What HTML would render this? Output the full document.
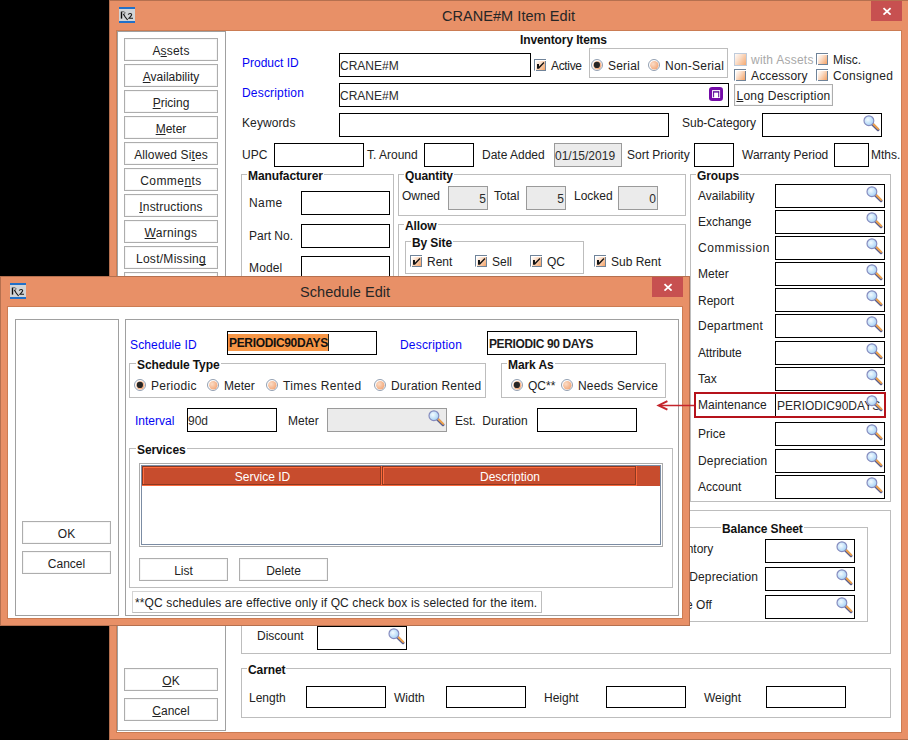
<!DOCTYPE html><html><head><meta charset="utf-8"><title>Item Edit</title><style>
*{box-sizing:border-box;margin:0;padding:0}
html,body{width:908px;height:740px;overflow:hidden;background:#000;}
body{position:relative;font-family:"Liberation Sans",sans-serif;font-size:12px;color:#1a1a1a;}
.abs,.w,.t,.tb,.gb,.btn,.cb,.rb,.lbl,.mag{position:absolute}
.win{position:absolute;background:#E89067;border:1px solid #B5704F;}
.title{position:absolute;font-size:14.5px;color:#262626;white-space:nowrap;letter-spacing:0.05px}
.close{position:absolute;background:#C75050;}
.client{position:absolute;background:#fff;outline:1px solid #CB7C53;}
.panel{position:absolute;background:#fff;border:1px solid #A0A0A0;}
.lbl{white-space:nowrap;font-size:12px;line-height:14px;color:#222;}
.blue{color:#0404F4}
.b{font-weight:bold;color:#111;letter-spacing:-0.12px}
.tb{position:absolute;border:1px solid #000;background:#fff;height:24px;font-size:12px;line-height:22px;padding-left:0;white-space:nowrap;overflow:hidden;color:#2a2a2a}
.tb.dis{border:1px solid #9a9a9a;background:#EBEBEB;}
.tb.r{text-align:right;padding-right:1px}
.gb{border:1px solid #BDBDBD;}
.gb>span{position:absolute;top:-6px;left:5px;background:#fff;padding:0 1px;font-weight:bold;font-size:12px;line-height:14px;white-space:nowrap;color:#111;letter-spacing:-0.1px}
.btn{border:1px solid #ADADAD;background:#fff;font-size:12px;text-align:center;white-space:nowrap;color:#222;box-shadow:inset 0 0 0 1px #f6f6f6}
.cb{width:13px;height:13px;border:1px solid #8E8F8F;background:linear-gradient(135deg,#ffffff 15%,#F7C9A8 60%,#EFA070 100%);}
.cb.dis{border-color:#BFC4CC;opacity:.75}
.cb svg{position:absolute;left:1px;top:1px}
.rb{width:13px;height:13px;border-radius:50%;border:1px solid #8E8F8F;background:radial-gradient(circle at 35% 35%,#ffffff 0%,#F9D3B6 45%,#EFA574 100%);}
.rb.on:after{content:"";position:absolute;left:2px;top:2px;width:7px;height:7px;border-radius:50%;background:#1a1a1a}
.hc{position:absolute;top:0;height:19px;border:1px solid #8C3921;background:#C74C2D;box-shadow:inset 1px 1px 0 #FF6E40;text-align:center;line-height:20px;white-space:nowrap;padding-left:2px}
u{text-decoration:underline;text-underline-offset:1px;text-decoration-skip-ink:none}
</style></head><body>
<svg width="0" height="0" style="position:absolute"><defs><linearGradient id="cg" x1="0" y1="0.15" x2="1" y2="0.85"><stop offset="0" stop-color="#FFF9F4"/><stop offset="0.35" stop-color="#FBDFCB"/><stop offset="1" stop-color="#F5A366"/></linearGradient><radialGradient id="rg" cx="35%" cy="35%" r="75%"><stop offset="0" stop-color="#FBDCC6"/><stop offset="1" stop-color="#F2A575"/></radialGradient></defs></svg>
<div class="win" style="left:109px;top:0;width:810px;height:740px"></div>
<svg class="abs" style="left:119px;top:7px" width="16" height="16" viewBox="0 0 16 16"><rect width="16" height="16" fill="#D2D4D6"/><rect width="16" height="2" fill="#2170C8"/><rect y="14" width="16" height="2" fill="#2170C8"/><path d="M2.5 4.6 V11.6" stroke="#0c0c0c" stroke-width="1.4" fill="none"/><path d="M2.6 4.9 C5 4.1 6.6 5.2 5.8 6.6 C5.4 7.2 4.6 7.4 4.2 7.4" stroke="#555" stroke-width="0.9" fill="none"/><path d="M4.4 7 L6.2 10 L8.6 13" stroke="#1a1a1a" stroke-width="1.2" fill="none"/><path d="M9.2 7.6 C9.8 6 12.9 6.1 12.6 7.9 C12.4 9 11 10 10 11.2 H14" stroke="#1c1c1c" stroke-width="1.15" fill="none"/></svg>
<div class="title" style="left:442px;top:7px;line-height:18px">CRANE#M Item Edit</div>
<div class="close" style="left:871px;top:1px;width:31px;height:20px"></div>
<svg class="abs" style="left:882px;top:6px" width="10" height="9" viewBox="0 0 10 9"><path d="M1.5 2.1 L8.6 8.6 M8.6 2.1 L1.5 8.6" stroke="#fff" stroke-width="1.8"/></svg>
<div class="client" style="left:117px;top:31px;width:784px;height:701px"></div>
<div class="panel" style="left:117px;top:31px;width:109px;height:700px"></div>
<div class="btn" style="left:124px;top:38px;width:94px;height:23px;line-height:24px;letter-spacing:0.200px;">A<u>s</u>sets</div>
<div class="btn" style="left:124px;top:64px;width:94px;height:23px;line-height:24px;"><u>A</u>vailability</div>
<div class="btn" style="left:124px;top:90px;width:94px;height:23px;line-height:24px;"><u>P</u>ricing</div>
<div class="btn" style="left:124px;top:116px;width:94px;height:23px;line-height:24px;"><u>M</u>eter</div>
<div class="btn" style="left:124px;top:142px;width:94px;height:23px;line-height:24px;letter-spacing:0.131px;">Allowed Si<u>t</u>es</div>
<div class="btn" style="left:124px;top:168px;width:94px;height:23px;line-height:24px;letter-spacing:0.438px;">Comme<u>n</u>ts</div>
<div class="btn" style="left:124px;top:194px;width:94px;height:23px;line-height:24px;letter-spacing:0.167px;"><u>I</u>nstructions</div>
<div class="btn" style="left:124px;top:220px;width:94px;height:23px;line-height:24px;letter-spacing:0.325px;"><u>W</u>arnings</div>
<div class="btn" style="left:124px;top:246px;width:94px;height:23px;line-height:24px;letter-spacing:0.283px;">Lost/Missin<u>g</u></div>
<div class="btn" style="left:124px;top:272px;width:94px;height:23px;line-height:24px;"></div>
<div class="btn" style="left:124px;top:668px;width:94px;height:23px;line-height:24px;"><u>O</u>K</div>
<div class="btn" style="left:124px;top:698px;width:94px;height:23px;line-height:24px;"><u>C</u>ancel</div>
<div class="lbl b" style="left:520px;top:33px;">Inventory Items</div>
<div class="lbl blue" style="left:242px;top:56px;">Product ID</div>
<div class="tb " style="left:339px;top:53px;width:192px;height:24px;line-height:24px;">CRANE#M</div>
<svg class="abs" style="left:534px;top:59px" width="12" height="12" viewBox="0 0 12 12"><rect x="2" y="2" width="9.5" height="9.5" fill="url(#cg)"/><path d="M0 0.5 H12 M0.5 0 V11.6" stroke="#6F8399" fill="none"/><path d="M2 11.5 H12 M11.5 2 V12" stroke="#6F8399" fill="none"/><path d="M3 5 L5 5 L5 7.6 L9.5 3 L10.4 4 L5 9.8 L3 9.8 Z" fill="#151515"/></svg>
<div class="lbl " style="left:551px;top:59px;letter-spacing:-0.333px;">Active</div>
<div class="gb" style="left:589px;top:48px;width:139px;height:30px"></div>
<svg class="abs" style="left:591px;top:59px" width="12" height="12" viewBox="0 0 12 12"><circle cx="6" cy="6" r="5.5" fill="#fff" stroke="#7E8EA3" stroke-width="0.85"/><circle cx="6.3" cy="6.3" r="4.2" fill="url(#rg)"/><circle cx="5.9" cy="5.9" r="3.1" fill="#262626"/></svg>
<div class="lbl " style="left:608px;top:59px;letter-spacing:0.200px;">Serial</div>
<svg class="abs" style="left:648px;top:59px" width="12" height="12" viewBox="0 0 12 12"><circle cx="6" cy="6" r="5.5" fill="#fff" stroke="#7E8EA3" stroke-width="0.85"/><circle cx="6.3" cy="6.3" r="4.2" fill="url(#rg)"/></svg>
<div class="lbl " style="left:665px;top:59px;letter-spacing:0.240px;">Non-Serial</div>
<svg class="abs" style="left:734px;top:53px" width="13" height="13" viewBox="0 0 13 13"><rect x="0.5" y="0.5" width="12" height="12" fill="url(#cg)" stroke="#B9C6D8" opacity="0.9"/></svg>
<div class="lbl " style="left:751px;top:53px;letter-spacing:0.236px;color:#a8a8a8">with Assets</div>
<svg class="abs" style="left:816px;top:53px" width="12" height="12" viewBox="0 0 12 12"><rect x="2" y="2" width="9.5" height="9.5" fill="url(#cg)"/><path d="M0 0.5 H12 M0.5 0 V11.6" stroke="#6F8399" fill="none"/><path d="M2 11.5 H12 M11.5 2 V12" stroke="#6F8399" fill="none"/></svg>
<div class="lbl " style="left:833px;top:53px;">Misc.</div>
<svg class="abs" style="left:734px;top:69px" width="12" height="12" viewBox="0 0 12 12"><rect x="2" y="2" width="9.5" height="9.5" fill="url(#cg)"/><path d="M0 0.5 H12 M0.5 0 V11.6" stroke="#6F8399" fill="none"/><path d="M2 11.5 H12 M11.5 2 V12" stroke="#6F8399" fill="none"/></svg>
<div class="lbl " style="left:751px;top:69px;letter-spacing:0.133px;">Accessory</div>
<svg class="abs" style="left:816px;top:69px" width="12" height="12" viewBox="0 0 12 12"><rect x="2" y="2" width="9.5" height="9.5" fill="url(#cg)"/><path d="M0 0.5 H12 M0.5 0 V11.6" stroke="#6F8399" fill="none"/><path d="M2 11.5 H12 M11.5 2 V12" stroke="#6F8399" fill="none"/></svg>
<div class="lbl " style="left:833px;top:69px;letter-spacing:0.333px;">Consigned</div>
<div class="lbl blue" style="left:242px;top:86px;letter-spacing:0.182px;">Description</div>
<div class="tb " style="left:339px;top:83px;width:390px;height:24px;line-height:24px;">CRANE#M</div>
<svg class="abs" style="left:709px;top:87px" width="14" height="14" viewBox="0 0 14 14"><rect x="0" y="0" width="14" height="14" rx="3.2" fill="#740BA8"/><rect x="3.1" y="3.1" width="8" height="7.9" fill="#fff"/><rect x="4.1" y="4.2" width="6.1" height="1.4" fill="#5C0A9A"/><path d="M4.6 5 V9.9 M9.7 5 V9.9" stroke="#5C0A9A" stroke-width="1" stroke-linecap="round" fill="none"/></svg>
<div class="btn" style="left:734px;top:84px;width:99px;height:22px;line-height:23px;letter-spacing:0.250px;"><u>L</u>ong Description</div>
<div class="lbl " style="left:242px;top:116px;letter-spacing:0.100px;">Keywords</div>
<div class="tb " style="left:339px;top:113px;width:330px;height:24px;line-height:24px;"></div>
<div class="lbl " style="left:682px;top:116px;">Sub-Category</div>
<div class="tb " style="left:762px;top:113px;width:120px;height:24px;line-height:24px;"></div>
<svg class="mag" style="left:863px;top:115px" width="17" height="17" viewBox="0 0 17 17">
<defs><radialGradient id="lg1" cx="40%" cy="40%" r="65%"><stop offset="0" stop-color="#F4FBFF"/><stop offset="1" stop-color="#A2D0F5"/></radialGradient></defs>
<path d="M9.6 9.4 L15.0 14.7" stroke="#5A5F8C" stroke-width="3" stroke-linecap="round"/>
<path d="M10 8.8 L15.2 13.9" stroke="#F0A24A" stroke-width="2" stroke-linecap="round"/>
<circle cx="5.9" cy="5.7" r="4.9" fill="url(#lg1)" stroke="#858BBE" stroke-width="1.15"/>
</svg>
<div class="lbl " style="left:242px;top:148px;">UPC</div>
<div class="tb " style="left:274px;top:143px;width:90px;height:24px;line-height:24px;"></div>
<div class="lbl " style="left:367px;top:148px;">T. Around</div>
<div class="tb " style="left:424px;top:143px;width:50px;height:24px;line-height:24px;"></div>
<div class="lbl " style="left:482px;top:148px;">Date Added</div>
<div class="tb dis" style="left:554px;top:143px;width:68px;height:24px;line-height:24px;">01/15/2019</div>
<div class="lbl " style="left:627px;top:148px;">Sort Priority</div>
<div class="tb " style="left:694px;top:143px;width:40px;height:24px;line-height:24px;"></div>
<div class="lbl " style="left:742px;top:148px;">Warranty Period</div>
<div class="tb " style="left:834px;top:143px;width:35px;height:24px;line-height:24px;"></div>
<div class="lbl " style="left:871px;top:148px;">Mths.</div>
<div class="gb" style="left:241px;top:174px;width:153px;height:120px"><span style="left:5px">Manufacturer</span></div>
<div class="lbl " style="left:249px;top:196px;letter-spacing:0.425px;">Name</div>
<div class="tb " style="left:301px;top:191px;width:89px;height:24px;line-height:24px;"></div>
<div class="lbl " style="left:249px;top:229px;">Part No.</div>
<div class="tb " style="left:301px;top:224px;width:89px;height:24px;line-height:24px;"></div>
<div class="lbl " style="left:249px;top:261px;letter-spacing:0.140px;">Model</div>
<div class="tb " style="left:301px;top:256px;width:89px;height:24px;line-height:24px;"></div>
<div class="gb" style="left:398px;top:174px;width:288px;height:42px"><span style="left:5px">Quantity</span></div>
<div class="lbl " style="left:402px;top:189px;">Owned</div>
<div class="tb dis r" style="left:448px;top:186px;width:40px;height:24px;line-height:24px;">5</div>
<div class="lbl " style="left:494px;top:189px;">Total</div>
<div class="tb dis r" style="left:526px;top:186px;width:40px;height:24px;line-height:24px;">5</div>
<div class="lbl " style="left:574px;top:189px;">Locked</div>
<div class="tb dis r" style="left:618px;top:186px;width:40px;height:24px;line-height:24px;">0</div>
<div class="gb" style="left:398px;top:224px;width:288px;height:80px"><span style="left:5px">Allow</span></div>
<div class="gb" style="left:405px;top:241px;width:179px;height:33px"><span style="left:5px">By Site</span></div>
<svg class="abs" style="left:410px;top:255px" width="12" height="12" viewBox="0 0 12 12"><rect x="2" y="2" width="9.5" height="9.5" fill="url(#cg)"/><path d="M0 0.5 H12 M0.5 0 V11.6" stroke="#6F8399" fill="none"/><path d="M2 11.5 H12 M11.5 2 V12" stroke="#6F8399" fill="none"/><path d="M3 5 L5 5 L5 7.6 L9.5 3 L10.4 4 L5 9.8 L3 9.8 Z" fill="#151515"/></svg>
<div class="lbl " style="left:427px;top:255px;">Rent</div>
<svg class="abs" style="left:475px;top:255px" width="12" height="12" viewBox="0 0 12 12"><rect x="2" y="2" width="9.5" height="9.5" fill="url(#cg)"/><path d="M0 0.5 H12 M0.5 0 V11.6" stroke="#6F8399" fill="none"/><path d="M2 11.5 H12 M11.5 2 V12" stroke="#6F8399" fill="none"/><path d="M3 5 L5 5 L5 7.6 L9.5 3 L10.4 4 L5 9.8 L3 9.8 Z" fill="#151515"/></svg>
<div class="lbl " style="left:492px;top:255px;">Sell</div>
<svg class="abs" style="left:530px;top:255px" width="12" height="12" viewBox="0 0 12 12"><rect x="2" y="2" width="9.5" height="9.5" fill="url(#cg)"/><path d="M0 0.5 H12 M0.5 0 V11.6" stroke="#6F8399" fill="none"/><path d="M2 11.5 H12 M11.5 2 V12" stroke="#6F8399" fill="none"/><path d="M3 5 L5 5 L5 7.6 L9.5 3 L10.4 4 L5 9.8 L3 9.8 Z" fill="#151515"/></svg>
<div class="lbl " style="left:547px;top:255px;">QC</div>
<svg class="abs" style="left:594px;top:255px" width="12" height="12" viewBox="0 0 12 12"><rect x="2" y="2" width="9.5" height="9.5" fill="url(#cg)"/><path d="M0 0.5 H12 M0.5 0 V11.6" stroke="#6F8399" fill="none"/><path d="M2 11.5 H12 M11.5 2 V12" stroke="#6F8399" fill="none"/><path d="M3 5 L5 5 L5 7.6 L9.5 3 L10.4 4 L5 9.8 L3 9.8 Z" fill="#151515"/></svg>
<div class="lbl " style="left:611px;top:255px;">Sub Rent</div>
<div class="gb" style="left:690px;top:174px;width:201px;height:328px"><span style="left:5px">Groups</span></div>
<div class="lbl " style="left:698px;top:189px;">Availability</div>
<div class="tb " style="left:775px;top:184px;width:110px;height:24px;line-height:24px;"></div>
<svg class="mag" style="left:866px;top:186px" width="17" height="17" viewBox="0 0 17 17">
<defs><radialGradient id="lg2" cx="40%" cy="40%" r="65%"><stop offset="0" stop-color="#F4FBFF"/><stop offset="1" stop-color="#A2D0F5"/></radialGradient></defs>
<path d="M9.6 9.4 L15.0 14.7" stroke="#5A5F8C" stroke-width="3" stroke-linecap="round"/>
<path d="M10 8.8 L15.2 13.9" stroke="#F0A24A" stroke-width="2" stroke-linecap="round"/>
<circle cx="5.9" cy="5.7" r="4.9" fill="url(#lg2)" stroke="#858BBE" stroke-width="1.15"/>
</svg>
<div class="lbl " style="left:698px;top:215px;">Exchange</div>
<div class="tb " style="left:775px;top:210px;width:110px;height:24px;line-height:24px;"></div>
<svg class="mag" style="left:866px;top:212px" width="17" height="17" viewBox="0 0 17 17">
<defs><radialGradient id="lg3" cx="40%" cy="40%" r="65%"><stop offset="0" stop-color="#F4FBFF"/><stop offset="1" stop-color="#A2D0F5"/></radialGradient></defs>
<path d="M9.6 9.4 L15.0 14.7" stroke="#5A5F8C" stroke-width="3" stroke-linecap="round"/>
<path d="M10 8.8 L15.2 13.9" stroke="#F0A24A" stroke-width="2" stroke-linecap="round"/>
<circle cx="5.9" cy="5.7" r="4.9" fill="url(#lg3)" stroke="#858BBE" stroke-width="1.15"/>
</svg>
<div class="lbl " style="left:698px;top:241px;letter-spacing:0.600px;">Commission</div>
<div class="tb " style="left:775px;top:236px;width:110px;height:24px;line-height:24px;"></div>
<svg class="mag" style="left:866px;top:238px" width="17" height="17" viewBox="0 0 17 17">
<defs><radialGradient id="lg4" cx="40%" cy="40%" r="65%"><stop offset="0" stop-color="#F4FBFF"/><stop offset="1" stop-color="#A2D0F5"/></radialGradient></defs>
<path d="M9.6 9.4 L15.0 14.7" stroke="#5A5F8C" stroke-width="3" stroke-linecap="round"/>
<path d="M10 8.8 L15.2 13.9" stroke="#F0A24A" stroke-width="2" stroke-linecap="round"/>
<circle cx="5.9" cy="5.7" r="4.9" fill="url(#lg4)" stroke="#858BBE" stroke-width="1.15"/>
</svg>
<div class="lbl " style="left:698px;top:267px;">Meter</div>
<div class="tb " style="left:775px;top:262px;width:110px;height:24px;line-height:24px;"></div>
<svg class="mag" style="left:866px;top:264px" width="17" height="17" viewBox="0 0 17 17">
<defs><radialGradient id="lg5" cx="40%" cy="40%" r="65%"><stop offset="0" stop-color="#F4FBFF"/><stop offset="1" stop-color="#A2D0F5"/></radialGradient></defs>
<path d="M9.6 9.4 L15.0 14.7" stroke="#5A5F8C" stroke-width="3" stroke-linecap="round"/>
<path d="M10 8.8 L15.2 13.9" stroke="#F0A24A" stroke-width="2" stroke-linecap="round"/>
<circle cx="5.9" cy="5.7" r="4.9" fill="url(#lg5)" stroke="#858BBE" stroke-width="1.15"/>
</svg>
<div class="lbl " style="left:698px;top:294px;">Report</div>
<div class="tb " style="left:775px;top:288px;width:110px;height:24px;line-height:24px;"></div>
<svg class="mag" style="left:866px;top:290px" width="17" height="17" viewBox="0 0 17 17">
<defs><radialGradient id="lg6" cx="40%" cy="40%" r="65%"><stop offset="0" stop-color="#F4FBFF"/><stop offset="1" stop-color="#A2D0F5"/></radialGradient></defs>
<path d="M9.6 9.4 L15.0 14.7" stroke="#5A5F8C" stroke-width="3" stroke-linecap="round"/>
<path d="M10 8.8 L15.2 13.9" stroke="#F0A24A" stroke-width="2" stroke-linecap="round"/>
<circle cx="5.9" cy="5.7" r="4.9" fill="url(#lg6)" stroke="#858BBE" stroke-width="1.15"/>
</svg>
<div class="lbl " style="left:698px;top:319px;letter-spacing:0.240px;">Department</div>
<div class="tb " style="left:775px;top:314px;width:110px;height:24px;line-height:24px;"></div>
<svg class="mag" style="left:866px;top:316px" width="17" height="17" viewBox="0 0 17 17">
<defs><radialGradient id="lg7" cx="40%" cy="40%" r="65%"><stop offset="0" stop-color="#F4FBFF"/><stop offset="1" stop-color="#A2D0F5"/></radialGradient></defs>
<path d="M9.6 9.4 L15.0 14.7" stroke="#5A5F8C" stroke-width="3" stroke-linecap="round"/>
<path d="M10 8.8 L15.2 13.9" stroke="#F0A24A" stroke-width="2" stroke-linecap="round"/>
<circle cx="5.9" cy="5.7" r="4.9" fill="url(#lg7)" stroke="#858BBE" stroke-width="1.15"/>
</svg>
<div class="lbl " style="left:698px;top:346px;letter-spacing:-0.133px;">Attribute</div>
<div class="tb " style="left:775px;top:341px;width:110px;height:24px;line-height:24px;"></div>
<svg class="mag" style="left:866px;top:343px" width="17" height="17" viewBox="0 0 17 17">
<defs><radialGradient id="lg8" cx="40%" cy="40%" r="65%"><stop offset="0" stop-color="#F4FBFF"/><stop offset="1" stop-color="#A2D0F5"/></radialGradient></defs>
<path d="M9.6 9.4 L15.0 14.7" stroke="#5A5F8C" stroke-width="3" stroke-linecap="round"/>
<path d="M10 8.8 L15.2 13.9" stroke="#F0A24A" stroke-width="2" stroke-linecap="round"/>
<circle cx="5.9" cy="5.7" r="4.9" fill="url(#lg8)" stroke="#858BBE" stroke-width="1.15"/>
</svg>
<div class="lbl " style="left:698px;top:372px;">Tax</div>
<div class="tb " style="left:775px;top:367px;width:110px;height:24px;line-height:24px;"></div>
<svg class="mag" style="left:866px;top:369px" width="17" height="17" viewBox="0 0 17 17">
<defs><radialGradient id="lg9" cx="40%" cy="40%" r="65%"><stop offset="0" stop-color="#F4FBFF"/><stop offset="1" stop-color="#A2D0F5"/></radialGradient></defs>
<path d="M9.6 9.4 L15.0 14.7" stroke="#5A5F8C" stroke-width="3" stroke-linecap="round"/>
<path d="M10 8.8 L15.2 13.9" stroke="#F0A24A" stroke-width="2" stroke-linecap="round"/>
<circle cx="5.9" cy="5.7" r="4.9" fill="url(#lg9)" stroke="#858BBE" stroke-width="1.15"/>
</svg>
<div class="lbl " style="left:698px;top:398px;">Maintenance</div>
<div class="tb " style="left:775px;top:393px;width:110px;height:24px;line-height:24px;padding-left:1px">PERIODIC90DAYS</div>
<svg class="mag" style="left:866px;top:395px" width="17" height="17" viewBox="0 0 17 17">
<defs><radialGradient id="lg10" cx="40%" cy="40%" r="65%"><stop offset="0" stop-color="#F4FBFF"/><stop offset="1" stop-color="#A2D0F5"/></radialGradient></defs>
<path d="M9.6 9.4 L15.0 14.7" stroke="#5A5F8C" stroke-width="3" stroke-linecap="round"/>
<path d="M10 8.8 L15.2 13.9" stroke="#F0A24A" stroke-width="2" stroke-linecap="round"/>
<circle cx="5.9" cy="5.7" r="4.9" fill="url(#lg10)" stroke="#858BBE" stroke-width="1.15"/>
</svg>
<div class="lbl " style="left:698px;top:427px;">Price</div>
<div class="tb " style="left:775px;top:422px;width:110px;height:24px;line-height:24px;"></div>
<svg class="mag" style="left:866px;top:424px" width="17" height="17" viewBox="0 0 17 17">
<defs><radialGradient id="lg11" cx="40%" cy="40%" r="65%"><stop offset="0" stop-color="#F4FBFF"/><stop offset="1" stop-color="#A2D0F5"/></radialGradient></defs>
<path d="M9.6 9.4 L15.0 14.7" stroke="#5A5F8C" stroke-width="3" stroke-linecap="round"/>
<path d="M10 8.8 L15.2 13.9" stroke="#F0A24A" stroke-width="2" stroke-linecap="round"/>
<circle cx="5.9" cy="5.7" r="4.9" fill="url(#lg11)" stroke="#858BBE" stroke-width="1.15"/>
</svg>
<div class="lbl " style="left:698px;top:454px;letter-spacing:0.167px;">Depreciation</div>
<div class="tb " style="left:775px;top:449px;width:110px;height:24px;line-height:24px;"></div>
<svg class="mag" style="left:866px;top:451px" width="17" height="17" viewBox="0 0 17 17">
<defs><radialGradient id="lg12" cx="40%" cy="40%" r="65%"><stop offset="0" stop-color="#F4FBFF"/><stop offset="1" stop-color="#A2D0F5"/></radialGradient></defs>
<path d="M9.6 9.4 L15.0 14.7" stroke="#5A5F8C" stroke-width="3" stroke-linecap="round"/>
<path d="M10 8.8 L15.2 13.9" stroke="#F0A24A" stroke-width="2" stroke-linecap="round"/>
<circle cx="5.9" cy="5.7" r="4.9" fill="url(#lg12)" stroke="#858BBE" stroke-width="1.15"/>
</svg>
<div class="lbl " style="left:698px;top:480px;">Account</div>
<div class="tb " style="left:775px;top:475px;width:110px;height:24px;line-height:24px;"></div>
<svg class="mag" style="left:866px;top:477px" width="17" height="17" viewBox="0 0 17 17">
<defs><radialGradient id="lg13" cx="40%" cy="40%" r="65%"><stop offset="0" stop-color="#F4FBFF"/><stop offset="1" stop-color="#A2D0F5"/></radialGradient></defs>
<path d="M9.6 9.4 L15.0 14.7" stroke="#5A5F8C" stroke-width="3" stroke-linecap="round"/>
<path d="M10 8.8 L15.2 13.9" stroke="#F0A24A" stroke-width="2" stroke-linecap="round"/>
<circle cx="5.9" cy="5.7" r="4.9" fill="url(#lg13)" stroke="#858BBE" stroke-width="1.15"/>
</svg>
<div class="abs" style="left:694px;top:392px;width:192px;height:26px;border:2px solid #B5121B"></div>
<div class="gb" style="left:241px;top:510px;width:650px;height:144px"><span style="left:5px"></span></div>
<div class="gb" style="left:600px;top:527px;width:268px;height:95px"><span style="left:120px">Balance Sheet</span></div>
<div class="lbl " style="left:664px;top:542px;">Inventory</div>
<div class="tb " style="left:765px;top:539px;width:90px;height:24px;line-height:24px;"></div>
<svg class="mag" style="left:836px;top:541px" width="17" height="17" viewBox="0 0 17 17">
<defs><radialGradient id="lg14" cx="40%" cy="40%" r="65%"><stop offset="0" stop-color="#F4FBFF"/><stop offset="1" stop-color="#A2D0F5"/></radialGradient></defs>
<path d="M9.6 9.4 L15.0 14.7" stroke="#5A5F8C" stroke-width="3" stroke-linecap="round"/>
<path d="M10 8.8 L15.2 13.9" stroke="#F0A24A" stroke-width="2" stroke-linecap="round"/>
<circle cx="5.9" cy="5.7" r="4.9" fill="url(#lg14)" stroke="#858BBE" stroke-width="1.15"/>
</svg>
<div class="lbl " style="left:662px;top:570px;letter-spacing:0.118px;">Acc. Depreciation</div>
<div class="tb " style="left:765px;top:567px;width:90px;height:24px;line-height:24px;"></div>
<svg class="mag" style="left:836px;top:569px" width="17" height="17" viewBox="0 0 17 17">
<defs><radialGradient id="lg15" cx="40%" cy="40%" r="65%"><stop offset="0" stop-color="#F4FBFF"/><stop offset="1" stop-color="#A2D0F5"/></radialGradient></defs>
<path d="M9.6 9.4 L15.0 14.7" stroke="#5A5F8C" stroke-width="3" stroke-linecap="round"/>
<path d="M10 8.8 L15.2 13.9" stroke="#F0A24A" stroke-width="2" stroke-linecap="round"/>
<circle cx="5.9" cy="5.7" r="4.9" fill="url(#lg15)" stroke="#858BBE" stroke-width="1.15"/>
</svg>
<div class="lbl " style="left:665px;top:598px;">Write Off</div>
<div class="tb " style="left:765px;top:595px;width:90px;height:24px;line-height:24px;"></div>
<svg class="mag" style="left:836px;top:597px" width="17" height="17" viewBox="0 0 17 17">
<defs><radialGradient id="lg16" cx="40%" cy="40%" r="65%"><stop offset="0" stop-color="#F4FBFF"/><stop offset="1" stop-color="#A2D0F5"/></radialGradient></defs>
<path d="M9.6 9.4 L15.0 14.7" stroke="#5A5F8C" stroke-width="3" stroke-linecap="round"/>
<path d="M10 8.8 L15.2 13.9" stroke="#F0A24A" stroke-width="2" stroke-linecap="round"/>
<circle cx="5.9" cy="5.7" r="4.9" fill="url(#lg16)" stroke="#858BBE" stroke-width="1.15"/>
</svg>
<div class="lbl " style="left:257px;top:629px;">Discount</div>
<div class="tb " style="left:317px;top:626px;width:90px;height:24px;line-height:24px;"></div>
<svg class="mag" style="left:388px;top:628px" width="17" height="17" viewBox="0 0 17 17">
<defs><radialGradient id="lg17" cx="40%" cy="40%" r="65%"><stop offset="0" stop-color="#F4FBFF"/><stop offset="1" stop-color="#A2D0F5"/></radialGradient></defs>
<path d="M9.6 9.4 L15.0 14.7" stroke="#5A5F8C" stroke-width="3" stroke-linecap="round"/>
<path d="M10 8.8 L15.2 13.9" stroke="#F0A24A" stroke-width="2" stroke-linecap="round"/>
<circle cx="5.9" cy="5.7" r="4.9" fill="url(#lg17)" stroke="#858BBE" stroke-width="1.15"/>
</svg>
<div class="gb" style="left:241px;top:668px;width:650px;height:50px"><span style="left:5px">Carnet</span></div>
<div class="lbl " style="left:249px;top:691px;">Length</div>
<div class="tb " style="left:306px;top:686px;width:80px;height:22px;line-height:22px;"></div>
<div class="lbl " style="left:394px;top:691px;">Width</div>
<div class="tb " style="left:446px;top:686px;width:80px;height:22px;line-height:22px;"></div>
<div class="lbl " style="left:544px;top:691px;">Height</div>
<div class="tb " style="left:606px;top:686px;width:80px;height:22px;line-height:22px;"></div>
<div class="lbl " style="left:704px;top:691px;">Weight</div>
<div class="tb " style="left:766px;top:686px;width:80px;height:22px;line-height:22px;"></div>
<div class="win" style="left:0px;top:276px;width:690px;height:350px"></div>
<svg class="abs" style="left:10px;top:283px" width="16" height="16" viewBox="0 0 16 16"><rect width="16" height="16" fill="#D2D4D6"/><rect width="16" height="2" fill="#2170C8"/><rect y="14" width="16" height="2" fill="#2170C8"/><path d="M2.5 4.6 V11.6" stroke="#0c0c0c" stroke-width="1.4" fill="none"/><path d="M2.6 4.9 C5 4.1 6.6 5.2 5.8 6.6 C5.4 7.2 4.6 7.4 4.2 7.4" stroke="#555" stroke-width="0.9" fill="none"/><path d="M4.4 7 L6.2 10 L8.6 13" stroke="#1a1a1a" stroke-width="1.2" fill="none"/><path d="M9.2 7.6 C9.8 6 12.9 6.1 12.6 7.9 C12.4 9 11 10 10 11.2 H14" stroke="#1c1c1c" stroke-width="1.15" fill="none"/></svg>
<div class="title" style="left:300px;top:283px;line-height:18px">Schedule Edit</div>
<div class="close" style="left:652px;top:277px;width:31px;height:20px"></div>
<svg class="abs" style="left:663px;top:282px" width="10" height="9" viewBox="0 0 10 9"><path d="M1.5 2.1 L8.6 8.6 M8.6 2.1 L1.5 8.6" stroke="#fff" stroke-width="1.8"/></svg>
<div class="client" style="left:8px;top:307px;width:674px;height:311px"></div>
<div class="panel" style="left:15px;top:319px;width:104px;height:297px"></div>
<div class="panel" style="left:125px;top:319px;width:554px;height:297px"></div>
<div class="btn" style="left:22px;top:521px;width:89px;height:23px;line-height:24px;">OK</div>
<div class="btn" style="left:22px;top:551px;width:89px;height:23px;line-height:24px;">Cancel</div>
<div class="lbl blue" style="left:130px;top:338px;letter-spacing:0.136px;">Schedule ID</div>
<div class="tb " style="left:227px;top:331px;width:150px;height:24px;line-height:24px;"><span style="position:absolute;left:0;top:2px;height:17px;line-height:19px;background:#F79646;font-weight:bold;color:#111;letter-spacing:-0.34px;padding-left:1px;border-right:1px solid #222">PERIODIC90DAYS</span></div>
<div class="lbl blue" style="left:400px;top:338px;letter-spacing:0.182px;">Description</div>
<div class="tb " style="left:487px;top:331px;width:150px;height:24px;line-height:24px;"><b style="letter-spacing:-0.38px;color:#1c1c1c;padding-left:1px">PERIODIC 90 DAYS</b></div>
<div class="gb" style="left:129px;top:363px;width:357px;height:35px"><span style="left:6px">Schedule Type</span></div>
<svg class="abs" style="left:134px;top:379px" width="12" height="12" viewBox="0 0 12 12"><circle cx="6" cy="6" r="5.5" fill="#fff" stroke="#7E8EA3" stroke-width="0.85"/><circle cx="6.3" cy="6.3" r="4.2" fill="url(#rg)"/><circle cx="5.9" cy="5.9" r="3.1" fill="#262626"/></svg>
<div class="lbl " style="left:151px;top:379px;letter-spacing:0.312px;">Periodic</div>
<svg class="abs" style="left:207px;top:379px" width="12" height="12" viewBox="0 0 12 12"><circle cx="6" cy="6" r="5.5" fill="#fff" stroke="#7E8EA3" stroke-width="0.85"/><circle cx="6.3" cy="6.3" r="4.2" fill="url(#rg)"/></svg>
<div class="lbl " style="left:224px;top:379px;">Meter</div>
<svg class="abs" style="left:266px;top:379px" width="12" height="12" viewBox="0 0 12 12"><circle cx="6" cy="6" r="5.5" fill="#fff" stroke="#7E8EA3" stroke-width="0.85"/><circle cx="6.3" cy="6.3" r="4.2" fill="url(#rg)"/></svg>
<div class="lbl " style="left:283px;top:379px;letter-spacing:0.358px;">Times Rented</div>
<svg class="abs" style="left:374px;top:379px" width="12" height="12" viewBox="0 0 12 12"><circle cx="6" cy="6" r="5.5" fill="#fff" stroke="#7E8EA3" stroke-width="0.85"/><circle cx="6.3" cy="6.3" r="4.2" fill="url(#rg)"/></svg>
<div class="lbl " style="left:391px;top:379px;letter-spacing:0.200px;">Duration Rented</div>
<div class="gb" style="left:501px;top:363px;width:165px;height:35px"><span style="left:5px">Mark As</span></div>
<svg class="abs" style="left:511px;top:379px" width="12" height="12" viewBox="0 0 12 12"><circle cx="6" cy="6" r="5.5" fill="#fff" stroke="#7E8EA3" stroke-width="0.85"/><circle cx="6.3" cy="6.3" r="4.2" fill="url(#rg)"/><circle cx="5.9" cy="5.9" r="3.1" fill="#262626"/></svg>
<div class="lbl " style="left:528px;top:379px;">QC**</div>
<svg class="abs" style="left:561px;top:379px" width="12" height="12" viewBox="0 0 12 12"><circle cx="6" cy="6" r="5.5" fill="#fff" stroke="#7E8EA3" stroke-width="0.85"/><circle cx="6.3" cy="6.3" r="4.2" fill="url(#rg)"/></svg>
<div class="lbl " style="left:578px;top:379px;letter-spacing:0.154px;">Needs Service</div>
<div class="lbl blue" style="left:135px;top:414px;">Interval</div>
<div class="tb " style="left:187px;top:408px;width:90px;height:24px;line-height:24px;">90d</div>
<div class="lbl " style="left:288px;top:414px;">Meter</div>
<div class="tb dis" style="left:327px;top:408px;width:120px;height:24px;line-height:24px;"></div>
<svg class="mag" style="left:428px;top:410px" width="17" height="17" viewBox="0 0 17 17">
<defs><radialGradient id="lg18" cx="40%" cy="40%" r="65%"><stop offset="0" stop-color="#F4FBFF"/><stop offset="1" stop-color="#A2D0F5"/></radialGradient></defs>
<path d="M9.6 9.4 L15.0 14.7" stroke="#5A5F8C" stroke-width="3" stroke-linecap="round"/>
<path d="M10 8.8 L15.2 13.9" stroke="#F0A24A" stroke-width="2" stroke-linecap="round"/>
<circle cx="5.9" cy="5.7" r="4.9" fill="url(#lg18)" stroke="#858BBE" stroke-width="1.15"/>
</svg>
<div class="lbl " style="left:455px;top:414px;">Est.&nbsp; Duration</div>
<div class="tb " style="left:537px;top:408px;width:100px;height:24px;line-height:24px;"></div>
<div class="gb" style="left:129px;top:448px;width:544px;height:140px"><span style="left:6px">Services</span></div>
<div class="abs" style="left:139px;top:463px;width:524px;height:84px;border:1px solid #ABABAB;background:#fff"><div class="abs" style="left:1px;top:1px;right:1px;bottom:1px;border:1px solid #7B8CA3"></div></div>
<div class="abs" style="left:142px;top:466px;width:518px;height:20px;background:#FA683B;color:#fff;font-size:12px;line-height:19px"><div class="hc" style="left:0;width:239px">Service ID</div><div class="hc" style="left:240px;width:254px">Description</div><div class="abs" style="left:495px;top:0;width:23px;height:20px;background:#C74C2D"></div></div>
<div class="btn" style="left:139px;top:558px;width:89px;height:23px;line-height:24px;">List</div>
<div class="btn" style="left:239px;top:558px;width:89px;height:23px;line-height:24px;">Delete</div>
<div class="abs" style="left:132px;top:591px;width:410px;height:22px;border:1px solid #D4D4D4;border-right-color:#BDBDBD;border-bottom-color:#BDBDBD;font-size:12px;line-height:22px;padding-left:2px;white-space:nowrap;color:#222;letter-spacing:0.12px">**QC schedules are effective only if QC check box is selected for the item.</div>
<svg class="abs" style="left:654px;top:398px" width="42" height="14" viewBox="0 0 42 14"><path d="M40 7.4 L5 7.4" stroke="#C4252C" stroke-width="1.5" fill="none"/><path d="M13.4 3.1 L4.6 7.4 L13.4 11.7" stroke="#C4252C" stroke-width="2" fill="none" stroke-linejoin="miter"/></svg>
</body></html>
